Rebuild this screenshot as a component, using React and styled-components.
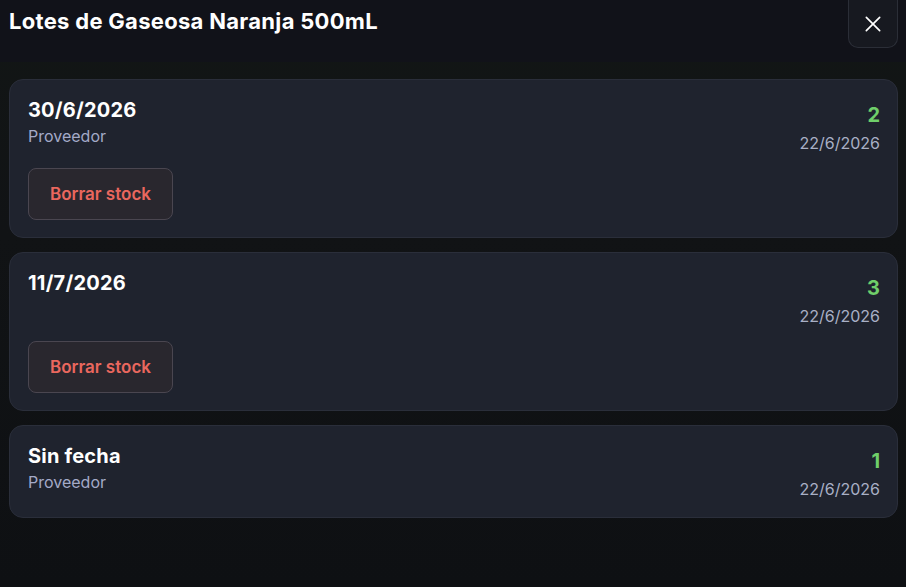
import React from 'react';
import styled, { createGlobalStyle } from 'styled-components';

const GlobalStyle = createGlobalStyle`
    html, body {
        margin: 0;
        padding: 0;
        background: #101216;
    }
    * {
        box-sizing: border-box;
        font-family: 'Inter', 'Noto Sans', sans-serif;
    }
`;

const lots = [
    { id: 1, expiry: '30/6/2026', supplier: 'Proveedor', qty: 2, added: '22/6/2026', removable: true },
    { id: 2, expiry: '11/7/2026', supplier: '', qty: 3, added: '22/6/2026', removable: true },
    { id: 3, expiry: 'Sin fecha', supplier: 'Proveedor', qty: 1, added: '22/6/2026', removable: false },
];

const Page = styled.div`
    width: 906px;
    height: 587px;
    display: flex;
    flex-direction: column;
    background: linear-gradient(180deg, #121615 0%, #111315 40%, #0e1013 100%);
    overflow: hidden;
`;

const Header = styled.header`
    height: 62px;
    display: flex;
    justify-content: space-between;
    align-items: flex-start;
    padding: 0 8px 0 9px;
    background: #111219;
`;

const Title = styled.h1`
    margin: 6px 0 0;
    font-size: 22px;
    line-height: 30px;
    font-weight: 700;
    color: #ffffff;
    letter-spacing: 0.3px;
`;

const CloseButton = styled.button`
    width: 50px;
    height: 48px;
    display: flex;
    align-items: center;
    justify-content: center;
    background: #171920;
    border: 1px solid #2b2e37;
    border-top: none;
    border-radius: 0 0 10px 10px;
    color: #ffffff;
    padding: 0;
    cursor: pointer;
`;

const List = styled.div`
    display: flex;
    flex-direction: column;
    gap: 14px;
    padding: 17px 8px 0 9px;
`;

const Card = styled.div`
    background: #1f232e;
    border: 1px solid #2a2e3a;
    border-radius: 14px;
    padding: 16px 17px 17px 18px;
    display: flex;
    flex-direction: column;
    gap: 14px;
`;

const Row = styled.div`
    display: flex;
    justify-content: space-between;
    align-items: flex-start;
`;

const Left = styled.div`
    display: flex;
    flex-direction: column;
`;

const Expiry = styled.div`
    font-size: 20px;
    line-height: 28px;
    font-weight: 700;
    color: #ffffff;
    letter-spacing: 0.2px;
`;

const Supplier = styled.div`
    font-size: 16px;
    line-height: 22px;
    margin-top: 1px;
    color: #a4aac8;
`;

const Right = styled.div`
    display: flex;
    flex-direction: column;
    align-items: flex-end;
    padding-top: 5px;
`;

const Qty = styled.div`
    font-size: 20px;
    line-height: 28px;
    font-weight: 700;
    color: #6fcf6a;
`;

const Added = styled.div`
    font-size: 16px;
    line-height: 22px;
    margin-top: 3px;
    color: #a9b0c6;
`;

const DeleteButton = styled.button`
    align-self: flex-start;
    width: 145px;
    height: 52px;
    background: #29272e;
    border: 1px solid #4a4650;
    border-radius: 8px;
    color: #ea675e;
    font-size: 17px;
    font-weight: 600;
    cursor: pointer;
`;

const XIcon = () => (
    <svg width="20" height="20" viewBox="0 0 24 24" fill="none" stroke="currentColor" strokeWidth="2" strokeLinecap="round">
        <path d="M4 4 L20 20 M20 4 L4 20" />
    </svg>
);

const App = () => (
    <Page>
        <GlobalStyle />
        <Header>
            <Title>Lotes de Gaseosa Naranja 500mL</Title>
            <CloseButton aria-label="Cerrar"><XIcon /></CloseButton>
        </Header>
        <List>
            {lots.map(lot => (
                <Card key={lot.id}>
                    <Row>
                        <Left>
                            <Expiry>{lot.expiry}</Expiry>
                            {lot.supplier && <Supplier>{lot.supplier}</Supplier>}
                        </Left>
                        <Right>
                            <Qty>{lot.qty}</Qty>
                            <Added>{lot.added}</Added>
                        </Right>
                    </Row>
                    {lot.removable && <DeleteButton>Borrar stock</DeleteButton>}
                </Card>
            ))}
        </List>
    </Page>
);

export default App;
